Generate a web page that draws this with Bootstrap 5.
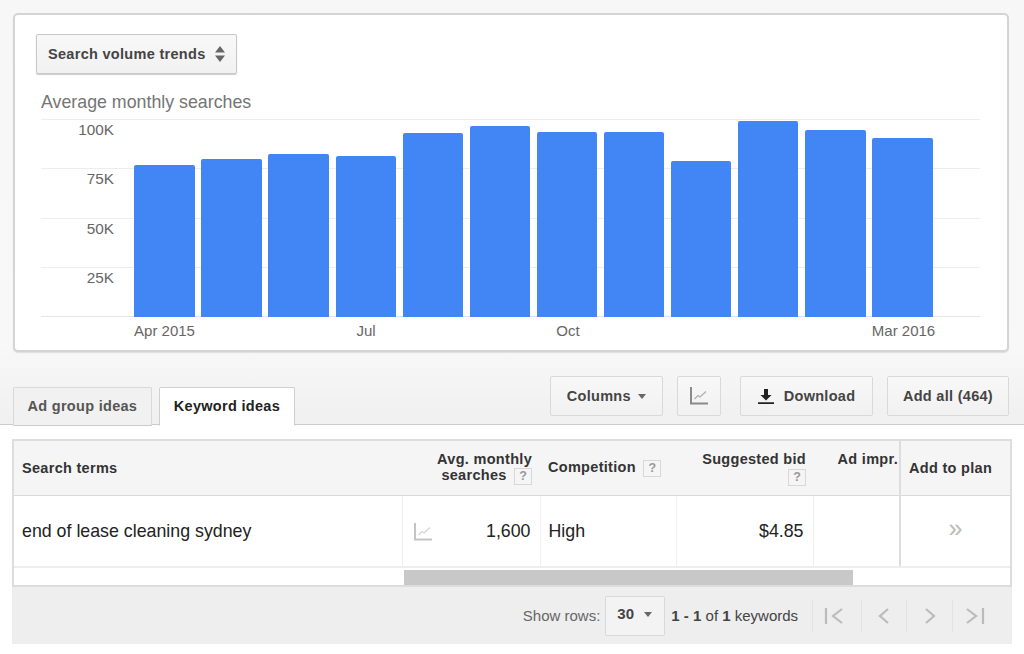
<!DOCTYPE html>
<html lang="en">
<head>
<meta charset="utf-8">
<title>Keyword Planner</title>
<link href="https://cdn.jsdelivr.net/npm/bootstrap@5.3.0/dist/css/bootstrap.min.css" rel="stylesheet">
<style>
html,body{height:654px;overflow:hidden}
body{background:#fff;font-family:"Liberation Sans",Arial,sans-serif;color:#333;font-size:14px}
.upper-band{height:425px;background:linear-gradient(#f7f7f7,#f8f8f8 345px,#f0f0f0);border-bottom:1px solid #ccc;padding:13px 15px 0 13px}
.chart-panel{height:339px;background:#fff;border:2px solid #d4d4d4;border-radius:5px;padding:19px 21px 0 21px;box-shadow:0 1px 1px #ddd}
.gbtn{height:40px;padding:0 16px;background:linear-gradient(#f8f8f8,#f1f1f1);border:1px solid #d9d9d9;border-radius:2px;color:#444;font-weight:700;font-size:14.5px;letter-spacing:.3px;line-height:38px;white-space:nowrap}
.gbtn:hover{background:#f1f1f1;border-color:#c6c6c6;color:#333}
.trend-btn{width:201px;padding:0 11px;border-color:#c8c8c8;box-shadow:0 1px 1px #ccc}
.chart-title{color:#757575;font-size:17.8px;line-height:20px;margin:18px 0 7px 5px}
.plot-area{height:197.5px;width:939px;margin-left:5px;position:relative}
.grid-row{height:49.3px;border-top:1px solid #ededed;color:#666;font-size:15.3px;line-height:20px;padding:0 866px 0 0;text-align:right;white-space:nowrap}
.grid-base{height:1px;background:#e6e6e6}
.bar-set{position:absolute;left:93.3px;bottom:0;display:flex;gap:6.8px;align-items:flex-end;height:198px}
.data-bar{width:60.3px;background:#4285f4;border-radius:2px 2px 0 0}
.axis-labels{position:relative;width:939px;height:20px;margin:4px 0 0 5px;color:#666;font-size:15px;line-height:20px}
.axis-tick{position:absolute;top:0;transform:translateX(-50%);white-space:nowrap}
.tool-row{height:72px;align-items:flex-end}
.idea-tabs{border:0;gap:7px;margin-bottom:-1px;flex-wrap:nowrap}
.idea-tabs .nav-link{height:39px;padding:0 13.5px;line-height:36px;font-weight:700;font-size:14.5px;letter-spacing:.3px;color:#555;background:#f1f1f1;border:1px solid #d9d9d9;border-bottom-color:#ccc;border-radius:2px 2px 0 0}
.idea-tabs .nav-link.active{color:#222;background:#fff;border-color:#d0d0d0;border-bottom-color:#fff;padding:0 14px}
.tool-btns{gap:14px;padding:0 0 8px}
.tool-btns .chart-btn{width:44px;padding:0;justify-content:center}
.tool-btns .dl-btn{margin-left:5px;padding:0 16.5px;gap:10px}
.tool-btns .all-btn{padding:0 15px}
.grid-wrap{margin:14px 12px 0 12px;width:1000px;border:2px solid #ddd;height:148px;overflow:hidden;background:#fff}
.kw-table{table-layout:fixed;margin:0;width:996px;border-collapse:collapse;--bs-table-bg:transparent}
.kw-table th{height:54px;background:#f5f5f5;font-size:14.5px;line-height:16.5px;letter-spacing:.3px;font-weight:700;color:#333;vertical-align:middle;padding:0 8px;border:0;border-bottom:1px solid #d9d9d9}
.kw-table td{height:72px;font-size:17.8px;color:#222;vertical-align:middle;padding:2px 8px 0;border:0;border-left:1px solid #efefef;border-bottom:2px solid #eee}
.kw-table td:first-child{border-left:0}
.kw-table td.spark-cell{padding-left:11px;padding-right:9px}
.kw-table td.bid-cell{padding-right:9px}
.kw-table .pin-col{border-left:2px solid #ddd;text-align:center}
.kw-table th.pin-col{padding:0 8px;text-align:left}
.kw-table th.imp-col{vertical-align:top;padding:10px 1px 0 0;text-align:right;white-space:nowrap;overflow:hidden}
.kw-table th.top-col{vertical-align:top;padding:10px 7px 0 0}
.help-box{display:inline-block;width:18px;height:17px;background:#f5f5f5;border:1px solid #d8d8d8;color:#999;font-size:12.5px;line-height:15px;text-align:center;font-weight:700;letter-spacing:0;vertical-align:0;margin-left:3px}
.add-arrow{color:#bbb;font-size:25px;line-height:20px}
.scroll-track{height:18px;padding:2px 0 0 390px}
.scroll-thumb{width:449px;height:15px;background:#c8c8c8}
.pager-band{margin:0 12px;width:1000px;height:57px;background:#eee;padding:0 15px 0 0;justify-content:flex-end;align-items:center;font-size:15px;color:#666;white-space:nowrap}
.pager-band>span{padding-top:2px}
.rows-pick{width:60px;height:40px;padding:0 12px 2px 11px;margin:0 6px 0 5px;background:#f3f3f3;border:1px solid #d9d9d9;border-radius:2px;font-weight:700;color:#444;font-size:15px;display:flex;align-items:center;justify-content:space-between}
.caret-mark{display:inline-block;width:0;height:0;border-left:4.5px solid transparent;border-right:4.5px solid transparent;border-top:5px solid #666;vertical-align:2px;margin-left:3px}
.range-text{color:#444}
.page-nav{display:flex;margin-left:14px}
.page-nav button{width:45.3px;height:32px;border:0;border-left:1px solid #e3e3e3;background:transparent;padding:0;display:flex;align-items:center;justify-content:center}
.page-nav button:first-child{width:49px;padding-right:6px}
</style>
</head>
<body>
<section class="upper-band">
  <div class="chart-panel">
    <button type="button" class="btn gbtn trend-btn d-flex align-items-center justify-content-between">Search volume trends
      <svg width="10" height="16" viewBox="0 0 10 16"><path d="M5 0l5 6.5H0zM5 16L0 9.500h10z" fill="#666"/></svg>
    </button>
    <div class="chart-title">Average monthly searches</div>
    <div class="plot-area">
      <div class="grid-row">100K</div>
      <div class="grid-row">75K</div>
      <div class="grid-row">50K</div>
      <div class="grid-row">25K</div>
      <div class="grid-base"></div>
      <div class="bar-set">
        <div class="data-bar" style="height:152px"></div>
        <div class="data-bar" style="height:158px"></div>
        <div class="data-bar" style="height:163px"></div>
        <div class="data-bar" style="height:161px"></div>
        <div class="data-bar" style="height:184px"></div>
        <div class="data-bar" style="height:191px"></div>
        <div class="data-bar" style="height:185px"></div>
        <div class="data-bar" style="height:185px"></div>
        <div class="data-bar" style="height:156px"></div>
        <div class="data-bar" style="height:196px"></div>
        <div class="data-bar" style="height:187px"></div>
        <div class="data-bar" style="height:179px"></div>
      </div>
    </div>
    <div class="axis-labels">
      <span class="axis-tick" style="left:123.500px">Apr 2015</span>
      <span class="axis-tick" style="left:325px">Jul</span>
      <span class="axis-tick" style="left:527px">Oct</span>
      <span class="axis-tick" style="left:862.500px">Mar 2016</span>
    </div>
  </div>
  <div class="tool-row d-flex justify-content-between">
    <ul class="nav nav-tabs idea-tabs">
      <li class="nav-item"><a class="nav-link" href="#">Ad group ideas</a></li>
      <li class="nav-item"><a class="nav-link active" href="#">Keyword ideas</a></li>
    </ul>
    <div class="tool-btns d-flex">
      <button type="button" class="btn gbtn">Columns <span class="caret-mark"></span></button>
      <button type="button" class="btn gbtn chart-btn d-flex align-items-center" aria-label="Chart">
        <svg width="18" height="18" viewBox="0 0 18 18"><path d="M1 0v16.500h17" fill="none" stroke="#8a8a8a" stroke-width="2"/><path d="M4.500 12l3.500-3.500 2 1.500 6-5.500" fill="none" stroke="#b0b0b0" stroke-width="1.300"/></svg>
      </button>
      <button type="button" class="btn gbtn dl-btn d-flex align-items-center">
        <svg width="16" height="15" viewBox="0 0 16 15"><path d="M6 0h4v6h3.500L8 11.500 2.500 6H6zM0 13.300h16V15H0z" fill="#222"/></svg>Download
      </button>
      <button type="button" class="btn gbtn all-btn">Add all (464)</button>
    </div>
  </div>
</section>
<div class="grid-wrap">
  <table class="table kw-table">
    <colgroup><col style="width:388px"><col style="width:138px"><col style="width:136px"><col style="width:137px"><col style="width:87px"><col style="width:110px"></colgroup>
    <thead>
      <tr>
        <th>Search terms</th>
        <th class="text-end">Avg. monthly<br>searches <span class="help-box">?</span></th>
        <th>Competition <span class="help-box">?</span></th>
        <th class="text-end top-col">Suggested bid<br><span class="help-box">?</span></th>
        <th class="imp-col">Ad impr.</th>
        <th class="pin-col">Add to plan</th>
      </tr>
    </thead>
    <tbody>
      <tr>
        <td>end of lease cleaning sydney</td>
        <td class="spark-cell"><div class="d-flex justify-content-between align-items-center">
          <svg width="18" height="18" viewBox="0 0 18 18"><path d="M1 0v16.500h17" fill="none" stroke="#c4c4c4" stroke-width="2"/><path d="M4.500 12l3.500-3.500 2 1.500 6-5.500" fill="none" stroke="#d4d4d4" stroke-width="1.300"/></svg>
          <span>1,600</span></div></td>
        <td>High</td>
        <td class="text-end bid-cell">$4.85</td>
        <td></td>
        <td class="pin-col"><span class="add-arrow">»</span></td>
      </tr>
    </tbody>
  </table>
  <div class="scroll-track"><div class="scroll-thumb"></div></div>
</div>
<div class="pager-band d-flex">
  <span>Show rows:</span>
  <button type="button" class="btn rows-pick">30 <span class="caret-mark"></span></button>
  <span class="range-text"><b>1 - 1</b> of <b>1</b> keywords</span>
  <div class="page-nav">
    <button type="button" aria-label="First"><svg width="20" height="18" viewBox="0 0 20 18"><path d="M2 1v16M18 2l-9 7 9 7" fill="none" stroke="#bbb" stroke-width="2.200"/></svg></button>
    <button type="button" aria-label="Previous"><svg width="14" height="18" viewBox="0 0 14 18"><path d="M11 2l-8 7 8 7" fill="none" stroke="#bbb" stroke-width="2.200"/></svg></button>
    <button type="button" aria-label="Next"><svg width="14" height="18" viewBox="0 0 14 18"><path d="M3 2l8 7-8 7" fill="none" stroke="#bbb" stroke-width="2.200"/></svg></button>
    <button type="button" aria-label="Last"><svg width="20" height="18" viewBox="0 0 20 18"><path d="M18 1v16M2 2l9 7-9 7" fill="none" stroke="#bbb" stroke-width="2.200"/></svg></button>
  </div>
</div>
<script src="https://cdn.jsdelivr.net/npm/bootstrap@5.3.0/dist/js/bootstrap.bundle.min.js"></script>
</body>
</html>
